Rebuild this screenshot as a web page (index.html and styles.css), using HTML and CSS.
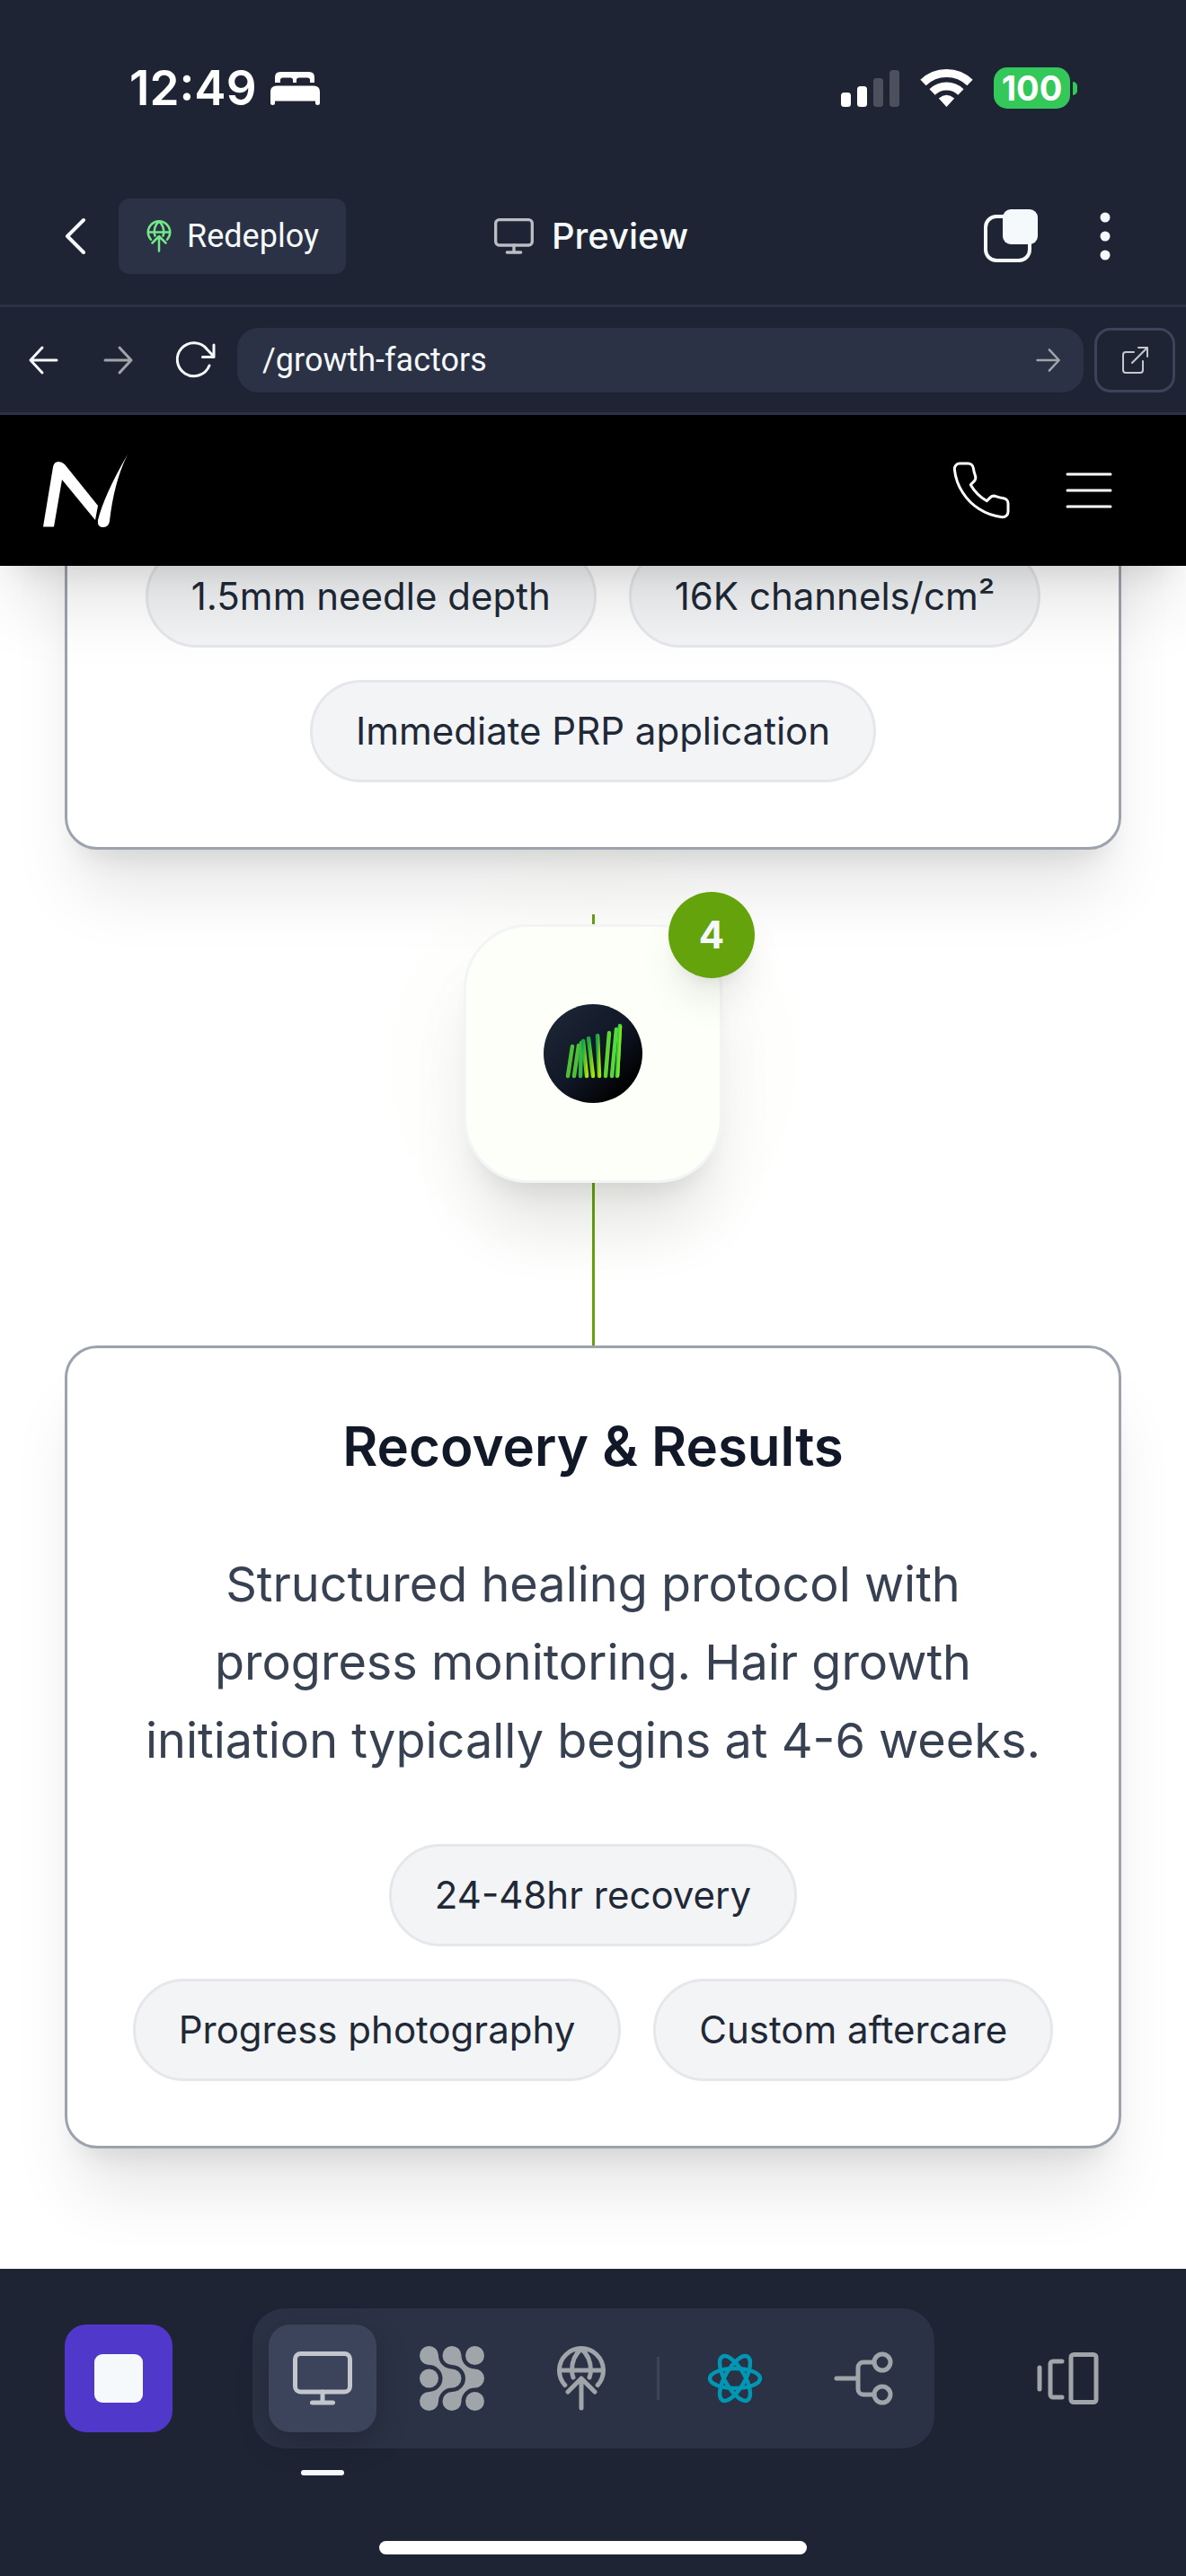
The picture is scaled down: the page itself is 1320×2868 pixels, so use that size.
FILE: index.html
```html
<!DOCTYPE html>
<html lang="en">
<head>
<meta charset="utf-8">
<meta name="viewport" content="width=device-width, initial-scale=1">
<title>Preview</title>
<link rel="stylesheet" href="styles.css">
</head>
<body>
<svg class="defs" aria-hidden="true">
  <symbol id="monitor" viewBox="0 0 72 72">
    <rect x="5.5" y="8.5" width="61" height="42.5" rx="6"/>
    <path d="M36 51v12M24.500 63h23"/>
  </symbol>
  <symbol id="deploy" viewBox="0 0 72 72">
    <path d="M17.800 43.500A24.500 24.500 0 1 1 54.200 43.500M11.500 27h49M36 3C29 9 25.500 18 25.500 27q0 4 1.500 8M36 3C43 9 46.500 18 46.500 27q0 4-1.500 8M36 37v32M21 51l15-15 15 15"/>
  </symbol>
  <symbol id="arrow" viewBox="0 0 36 36">
    <path d="M3 18h29M19 4l13 14-13 14"/>
  </symbol>
</svg>

<div class="app">
  <div class="status">
    <div class="status-side">
      <time class="clock">12:49</time>
      <svg class="bed" viewBox="0 0 55 37" aria-hidden="true"><path d="M5 12V6Q5 0 11 0H43Q49 0 49 6V12H44V9Q44 6.500 41 6.500H32Q29 6.500 29 9V12H25V9Q25 6.500 22 6.500H14Q11 6.500 11 9V12Z"/><path d="M0 35V22Q0 15.500 7 15.500H48Q55 15.500 55 22V35Q55 37 52.500 37Q50 37 50 35V32.500H5V35Q5 37 2.500 37Q0 37 0 35Z"/></svg>
    </div>
    <div class="status-side status-right">
      <svg class="signal" viewBox="0 0 65 42" aria-hidden="true"><rect y="26" width="11" height="16" rx="3.500"/><rect x="18" y="19" width="11" height="23" rx="3.500"/><g opacity=".2"><rect x="36" y="10" width="11" height="32" rx="3.500"/><rect x="54" y="1" width="11" height="41" rx="3.500"/></g></svg>
      <svg class="wifi" viewBox="0 0 57 42" aria-hidden="true"><path d="M2.500 15A37.500 37.500 0 0 1 54.500 15" class="wifi-arc"/><path d="M12.600 25.500A22.900 22.900 0 0 1 44.400 25.500" class="wifi-arc"/><path d="M28.500 42L19.800 32.400Q28.500 25 37.200 32.400Z"/></svg>
      <div class="battery"><span class="battery-level">100</span><span class="battery-nub"></span></div>
    </div>
  </div>

  <header class="topbar">
    <div class="topbar-left">
      <button class="icon-btn" aria-label="Back"><svg class="ico-60" viewBox="0 0 60 60"><path d="M39 12L21 30l18 18" stroke-width="4"/></svg></button>
      <button class="redeploy"><svg class="ico-36 green"><use href="#deploy"/></svg>Redeploy</button>
    </div>
    <h1 class="title"><svg class="ico-48"><use href="#monitor"/></svg>Preview</h1>
    <div class="topbar-right">
      <button class="icon-btn" aria-label="Windows"><svg class="ico-60" viewBox="0 0 60 60"><rect x="2" y="8" width="49" height="49" rx="12" stroke-width="4"/><rect x="21" y="0" width="39" height="39" rx="9" class="solid"/></svg></button>
      <button class="icon-btn" aria-label="More"><svg class="ico-60" viewBox="0 0 60 60"><g class="solid"><circle cx="30" cy="9" r="5.500"/><circle cx="30" cy="30" r="5.500"/><circle cx="30" cy="51" r="5.500"/></g></svg></button>
    </div>
  </header>

  <form class="address">
    <div class="address-nav">
      <button type="button" class="nav-btn" aria-label="Go back"><svg class="ico-36 flip"><use href="#arrow"/></svg></button>
      <button type="button" class="nav-btn dim" aria-label="Go forward"><svg class="ico-36"><use href="#arrow"/></svg></button>
      <button type="button" class="nav-btn" aria-label="Reload"><svg class="ico-48" viewBox="0 0 48 48"><path d="M41 30A18.500 18.500 0 1 1 38.500 12L46 20M46 7v13.500H33.500" stroke-width="3"/></svg></button>
    </div>
    <div class="url">
      <input class="url-input" type="text" value="/growth-factors" aria-label="Page path">
      <button type="button" class="go dim" aria-label="Go"><svg class="ico-30"><use href="#arrow"/></svg></button>
    </div>
    <button type="button" class="open" aria-label="Open in new tab"><svg class="ico-36" viewBox="0 0 36 36"><path d="M17 9H8a3 3 0 0 0-3 3v17a3 3 0 0 0 3 3h16a3 3 0 0 0 3-3V19M15 21L32 4M22 4h10v10" stroke-width="2"/></svg></button>
  </form>

  <div class="site-header">
    <a href="#" class="logo" aria-label="Home"><svg class="logo-mark" viewBox="0 0 94 81"><path d="M0 80.500H12L21 28L58 73L61 57L24 11Q21 8 17 8Q12 8 11 14Z"/><path d="M94 0Q68 45 61 73Q60 81 67 81Q73 81 74 74Q79 30 94 0Z"/></svg></a>
    <div class="site-actions">
      <a href="#" aria-label="Call"><svg class="ico-72" viewBox="0 0 24 24"><path stroke-width="1" d="M22 16.920v3a2 2 0 0 1-2.180 2 19.790 19.790 0 0 1-8.630-3.070 19.500 19.500 0 0 1-6-6 19.790 19.790 0 0 1-3.070-8.670A2 2 0 0 1 4.110 2h3a2 2 0 0 1 2 1.720 12.840 12.840 0 0 0 .7 2.810 2 2 0 0 1-.45 2.110L8.090 9.910a16 16 0 0 0 6 6l1.270-1.270a2 2 0 0 1 2.110-.45 12.840 12.840 0 0 0 2.810.7A2 2 0 0 1 22 16.920z"/></svg></a>
      <button aria-label="Menu"><svg class="ico-72" viewBox="0 0 24 24"><path stroke-width="1" d="M4 6h16M4 12h16M4 18h16"/></svg></button>
    </div>
  </div>

  <main class="page">
    <section class="card card-first">
      <ul class="chips">
        <li class="chip">1.5mm needle depth</li>
        <li class="chip">16K channels/cm²</li>
        <li class="chip">Immediate PRP application</li>
      </ul>
    </section>

    <div class="step">
      <div class="tile">
        <svg class="strands" viewBox="0 0 110 110" aria-hidden="true">
          <defs>
            <linearGradient id="night" x1="0" y1="0" x2="1" y2="1"><stop offset="0" stop-color="#1f2937"/><stop offset=".5" stop-color="#111827"/><stop offset=".85" stop-color="#000"/></linearGradient>
            <linearGradient id="leaf" x1="0" y1="0" x2="1" y2="1"><stop offset="0" stop-color="#16a34a"/><stop offset="1" stop-color="#a3e605"/></linearGradient>
          </defs>
          <circle cx="55" cy="55" r="55" fill="url(#night)"/>
          <g stroke-width="4.500" stroke-linecap="round">
            <path d="M27 80L32 47" stroke="#4fbf35"/>
            <path d="M34 80L39 46" stroke="#4fbf35"/>
            <path d="M41 80L42 43" stroke="#35b84a"/>
            <path d="M48 80L44 41" stroke="url(#leaf)"/>
            <path d="M55 80L50 38" stroke="url(#leaf)"/>
            <path d="M62 80L60 35" stroke="url(#leaf)"/>
            <path d="M69 80L73 32" stroke="#5bd632"/>
            <path d="M76 80L81 28" stroke="#55d83a"/>
            <path d="M82 80L85 24" stroke="#3fcf4a"/>
            <path d="M83 80L86 25" stroke="#7be81c" stroke-width="2.500"/>
          </g>
        </svg>
        <span class="badge">4</span>
      </div>
    </div>

    <section class="card">
      <h2 class="card-title">Recovery &amp; Results</h2>
      <p class="card-text">Structured healing protocol with progress monitoring. Hair growth initiation typically begins at 4-6 weeks.</p>
      <ul class="chips">
        <li class="chip">24-48hr recovery</li>
        <li class="chip">Progress photography</li>
        <li class="chip">Custom aftercare</li>
      </ul>
    </section>
  </main>

  <footer class="dock">
    <div class="dock-row">
      <button class="dock-btn stop" aria-label="Stop"><span class="stop-square"></span></button>
      <nav class="tabs" aria-label="Workspace">
        <button class="dock-btn active" aria-label="Preview"><svg class="ico-72"><use href="#monitor"/></svg></button>
        <button class="dock-btn" aria-label="Agent"><svg class="ico-72" viewBox="0 0 72 72"><g class="solid"><path id="flow" d="M10.500 0A10.500 10.500 0 0 1 21 10.500A15 15 0 0 0 36 25.500A10.500 10.500 0 0 1 36 46.500A15 15 0 0 0 21 61.500A10.500 10.500 0 1 1 10.500 51A15 15 0 0 0 25.500 36A15 15 0 0 0 10.500 21A10.500 10.500 0 1 1 10.500 0Z"/><use href="#flow" x="25.500"/><circle cx="10.500" cy="36" r="10.500"/><circle cx="61.500" cy="10.500" r="10.500"/><circle cx="61.500" cy="61.500" r="10.500"/></g></svg></button>
        <button class="dock-btn" aria-label="Deployments"><svg class="ico-72"><use href="#deploy"/></svg></button>
        <span class="divider"></span>
        <button class="dock-btn react" aria-label="React"><svg class="ico-72" viewBox="0 0 72 72"><g stroke-width="4.500"><ellipse cx="36" cy="36" rx="28" ry="11"/><ellipse cx="36" cy="36" rx="28" ry="11" transform="rotate(60 36 36)"/><ellipse cx="36" cy="36" rx="28" ry="11" transform="rotate(120 36 36)"/></g></svg></button>
        <button class="dock-btn" aria-label="Branches"><svg class="ico-72" viewBox="0 0 72 72"><path d="M5 36h24M47 18H35a6 6 0 0 0-6 6v24a6 6 0 0 0 6 6h12"/><circle cx="56" cy="18" r="9"/><circle cx="56" cy="54" r="9"/></svg></button>
      </nav>
      <button class="dock-btn" aria-label="Panels"><svg class="ico-72" viewBox="0 0 72 72"><path d="M5 24v24M30 17H20a3 3 0 0 0-3 3v34a3 3 0 0 0 3 3h10"/><rect x="40" y="9.500" width="28" height="53" rx="3"/></svg></button>
    </div>
    <div class="home-bar"></div>
  </footer>
</div>
</body>
</html>
```
FILE: styles.css
```css
* {
  box-sizing: border-box;
}

body {
  margin: 0;
  background: #1e2433;
  font-family: Inter, "Liberation Sans", sans-serif;
}

h1, h2, p, ul {
  margin: 0;
  padding: 0;
}

button {
  padding: 0;
  border: 0;
  background: none;
  color: inherit;
  font: inherit;
  display: flex;
  align-items: center;
  justify-content: center;
  cursor: pointer;
}

svg {
  display: block;
  flex: none;
  fill: none;
  stroke: currentColor;
  stroke-width: 5;
  stroke-linecap: round;
  stroke-linejoin: round;
  overflow: visible;
}

.defs {
  position: absolute;
  width: 0;
  height: 0;
}

.solid {
  fill: currentColor;
  stroke: none;
}

.ico-30 { width: 30px; height: 30px; stroke-width: 3; }
.ico-36 { width: 36px; height: 36px; }
.ico-48 { width: 48px; height: 48px; }
.ico-60 { width: 60px; height: 60px; }
.ico-72 { width: 72px; height: 72px; }

.flip { transform: scaleX(-1); }

.app {
  min-height: 100vh;
  display: flex;
  flex-direction: column;
  color: #f5f9fc;
}

/* Phone status bar */

.status {
  height: 186px;
  padding: 10px 121px 0 144px;
  display: flex;
  align-items: center;
  justify-content: space-between;
  color: #fff;
}

.status-side {
  display: flex;
  align-items: center;
  gap: 15px;
}

.status-right { gap: 24px; }

.status svg {
  fill: currentColor;
  stroke: none;
}

.clock {
  font-size: 53px;
  font-weight: 600;
}

.bed { width: 55px; height: 37px; }
.signal { width: 65px; height: 42px; }
.wifi { width: 57px; height: 42px; }

.status .wifi-arc {
  fill: none;
  stroke: currentColor;
  stroke-width: 9;
  stroke-linecap: butt;
}

.battery {
  display: flex;
  align-items: center;
  gap: 3px;
}

.battery-level {
  width: 85px;
  height: 46px;
  border-radius: 15px;
  background: #34c759;
  font-size: 38px;
  font-weight: 700;
  line-height: 46px;
  text-align: center;
}

.battery-nub {
  width: 5px;
  height: 15px;
  border-radius: 0 6px 6px 0;
  background: #34c759;
}

/* App header */

.topbar {
  height: 156px;
  padding: 0 60px 0 54px;
  border-bottom: 3px solid #2b3245;
  display: grid;
  grid-template-columns: 1fr auto 1fr;
  align-items: center;
}

.topbar-left,
.topbar-right {
  display: flex;
  align-items: center;
  gap: 18px;
}

.topbar-right {
  justify-content: flex-end;
  gap: 45px;
}

.redeploy {
  height: 84px;
  padding: 0 30px 0 27px;
  border-radius: 12px;
  background: #2b3245;
  gap: 13px;
  font: 400 36px Roboto, sans-serif;
}

.green { color: #74e789; }

.title {
  display: flex;
  align-items: center;
  gap: 18px;
  font-size: 40px;
  font-weight: 500;
}

.title svg { color: #b9bec3; }

/* Address row */

.address {
  height: 120px;
  padding: 0 12px 0 6px;
  border-bottom: 3px solid #2b3245;
  display: flex;
  align-items: center;
}

.address-nav {
  display: flex;
  margin-right: 6px;
}

.nav-btn {
  width: 84px;
  height: 84px;
}

.nav-btn svg { stroke-width: 3; }

.dim { color: #a0a5a9; }

.url {
  flex: 1;
  height: 72px;
  padding: 0 24px 0 28px;
  border-radius: 24px;
  background: #2b3245;
  display: flex;
  align-items: center;
}

.url-input {
  flex: 1;
  min-width: 0;
  padding: 0;
  border: 0;
  outline: 0;
  background: none;
  color: inherit;
  font: 400 36px Roboto, sans-serif;
}

.open {
  width: 90px;
  height: 72px;
  margin-left: 12px;
  border: 3px solid #3c445c;
  border-radius: 18px;
  color: #c3c8cc;
}

/* Previewed site */

.site-header {
  height: 168px;
  padding: 0 72px 0 48px;
  background: #000;
  color: #fff;
  display: flex;
  align-items: center;
  justify-content: space-between;
  position: relative;
  z-index: 2;
}

.site-header,
.card,
.tile {
  box-shadow: 0 60px 75px -15px rgba(0, 0, 0, .1), 0 24px 30px -18px rgba(0, 0, 0, .1);
}

.site-header a { color: inherit; }

.logo-mark {
  width: 94px;
  height: 81px;
  fill: currentColor;
  stroke: none;
}

.site-actions {
  display: flex;
  gap: 48px;
}

.page {
  flex: 1;
  padding: 0 72px 134px;
  background: #fff;
}

.card {
  padding: 72px;
  border: 3px solid #9ca3af;
  border-radius: 36px;
  background: #fff;
  position: relative;
  text-align: center;
}

/* The page is scrolled: the top of this card lies under the site header. */
.card-first { margin-top: -98px; }

.card-title {
  margin-bottom: 72px;
  color: #111827;
  font-size: 60px;
  font-weight: 600;
  line-height: 75px;
}

.card-text {
  margin-bottom: 72px;
  color: #374151;
  font-size: 54px;
  line-height: 87px;
}

.chips {
  list-style: none;
  display: flex;
  flex-wrap: wrap;
  justify-content: center;
  gap: 36px;
}

.chip {
  padding: 24px 48px;
  border: 3px solid #e5e7eb;
  border-radius: 57px;
  background: #f3f4f6;
  color: #1f2937;
  font-size: 42px;
  line-height: 60px;
}

.step {
  padding: 83px 0 181px;
  display: flex;
  justify-content: center;
  background:
    linear-gradient(#65a30d, #65a30d) 50% 100% / 3px calc(100% - 72px) no-repeat,
    radial-gradient(circle at 50% 240px, rgba(132, 204, 22, .04), rgba(132, 204, 22, 0) 270px);
}

.tile {
  width: 288px;
  height: 288px;
  border: 3px solid #f3f4f6;
  border-radius: 72px;
  background: #fdfff9;
  display: flex;
  align-items: center;
  justify-content: center;
  position: relative;
}

.strands {
  width: 110px;
  height: 110px;
  stroke: none;
}

.badge {
  width: 96px;
  height: 96px;
  border-radius: 50%;
  background: #65a30d;
  box-shadow: 0 30px 45px -9px rgba(0, 0, 0, .1), 0 12px 18px -12px rgba(0, 0, 0, .1);
  position: absolute;
  top: -39px;
  right: -39px;
  font-size: 42px;
  font-weight: 700;
  line-height: 96px;
  text-align: center;
}

/* Bottom dock */

.dock {
  padding: 44px 0 24px;
  background: #1e2433;
  position: relative;
  z-index: 1;
}

.dock-row {
  padding: 0 72px;
  display: flex;
  align-items: center;
  justify-content: space-between;
}

.dock-btn {
  width: 120px;
  height: 120px;
  border-radius: 24px;
  color: #a0a5a9;
}

.stop { background: #5038cb; }

.stop-square {
  width: 54px;
  height: 54px;
  border-radius: 9px;
  background: #f5f9fc;
}

.tabs {
  padding: 18px;
  border-radius: 36px;
  background: #2b3245;
  display: flex;
  align-items: center;
  gap: 24px;
}

.active {
  background: #3c445c;
  color: #c3c6cc;
  box-shadow: 0 12px 36px rgba(0, 0, 0, .2);
  position: relative;
}

.active::after {
  content: "";
  width: 48px;
  height: 6px;
  border-radius: 3px;
  background: #f5f9ff;
  position: absolute;
  bottom: -48px;
  left: 36px;
}

.divider {
  width: 3px;
  height: 48px;
  background: #3c445c;
}

.react { color: #0097b5; }

.home-bar {
  width: 36%;
  height: 15px;
  margin: 103px auto 0;
  border-radius: 8px;
  background: #fff;
}
```
